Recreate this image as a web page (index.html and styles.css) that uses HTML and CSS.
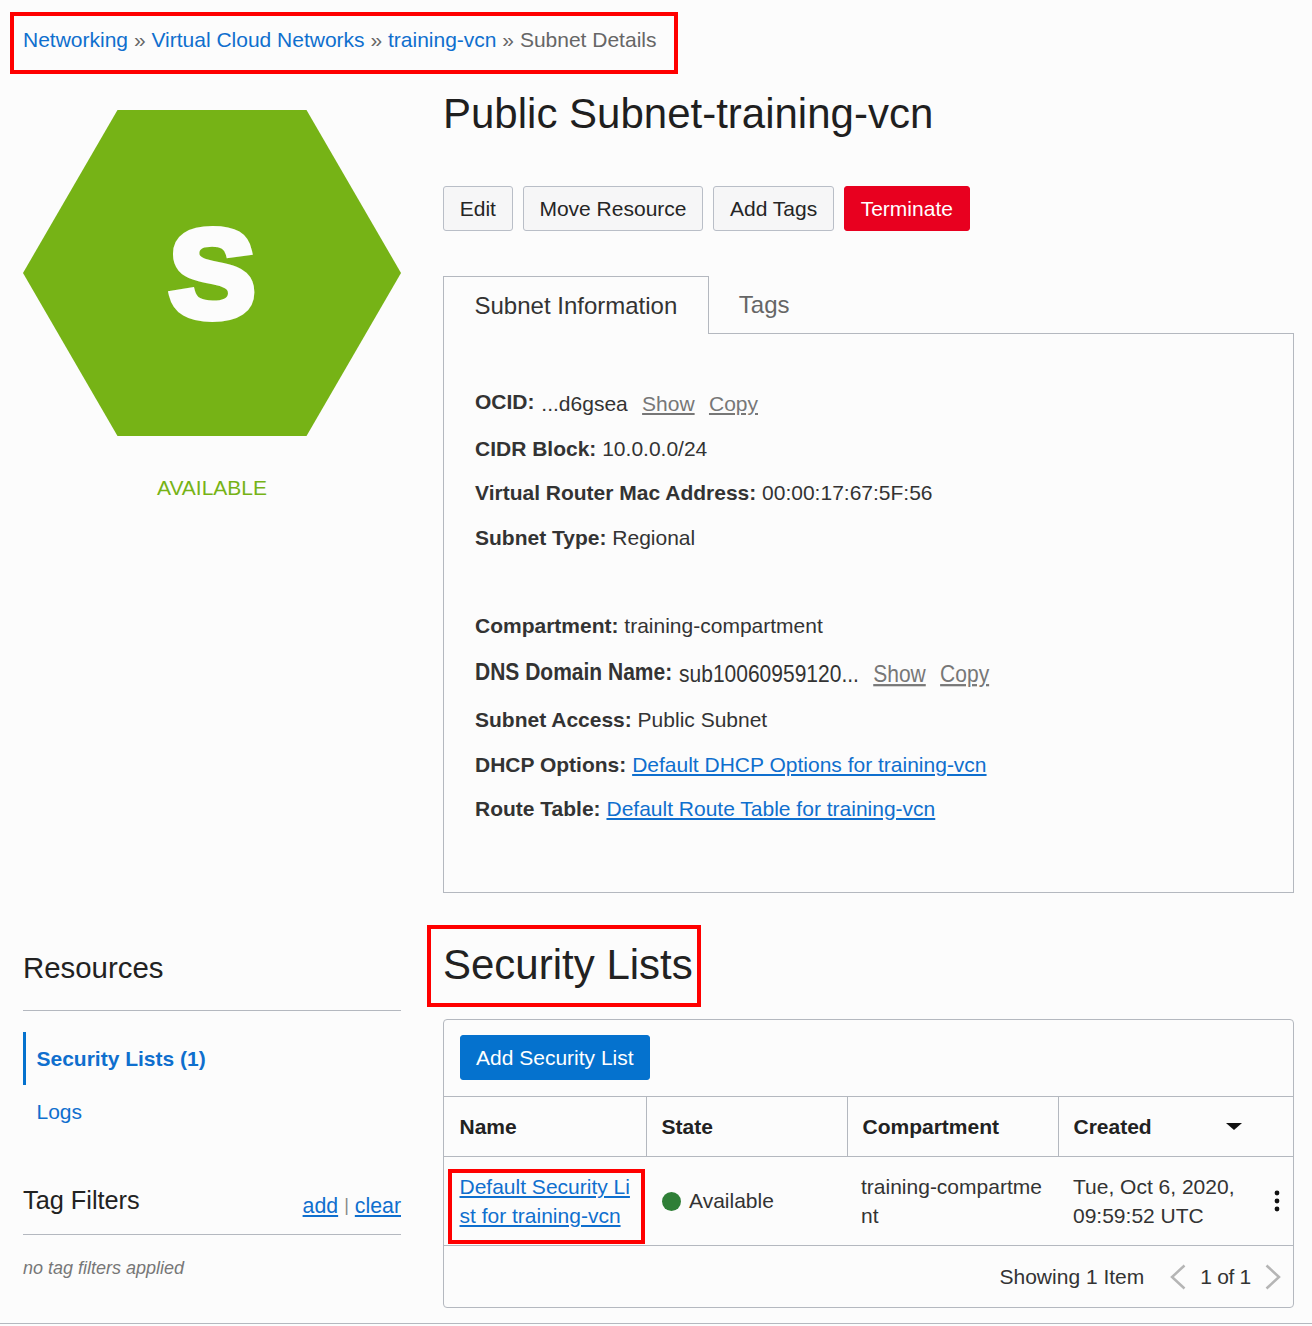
FILE: index.html
```html
<!DOCTYPE html>
<html lang="en">
<head>
    <meta charset="UTF-8">
    <title>Subnet Details</title>
    <link rel="stylesheet" href="styles.css">
</head>
<body>
    <nav class="crumbs">
        <a href="#">Networking</a> » <a href="#">Virtual Cloud Networks</a> » <a href="#">training-vcn</a> » Subnet Details
    </nav>

    <div class="layout">
        <div class="side">
            <div class="hex"><span class="hex-letter">S</span></div>
            <div class="status">AVAILABLE</div>
        </div>
        <div class="main">
            <h1 class="title">Public Subnet-training-vcn</h1>
            <div class="actions">
                <button class="btn">Edit</button>
                <button class="btn">Move Resource</button>
                <button class="btn">Add Tags</button>
                <button class="btn btn-danger">Terminate</button>
            </div>
            <div class="tabs">
                <div class="tab tab-active">Subnet Information</div>
                <div class="tab">Tags</div>
            </div>
            <div class="panel">
                <div class="info info-tall"><b>OCID:</b> <span class="val">...d6gsea</span> <a class="muted" href="#">Show</a> <a class="muted" href="#">Copy</a></div>
                <div class="info"><b>CIDR Block:</b> 10.0.0.0/24</div>
                <div class="info"><b>Virtual Router Mac Address:</b> 00:00:17:67:5F:56</div>
                <div class="info info-gap"><b>Subnet Type:</b> Regional</div>
                <div class="info"><b>Compartment:</b> training-compartment</div>
                <div class="info info-tall info-dns"><b>DNS Domain Name:</b> <span class="val">sub10060959120...</span> <a class="muted" href="#">Show</a> <a class="muted" href="#">Copy</a></div>
                <div class="info"><b>Subnet Access:</b> Public Subnet</div>
                <div class="info"><b>DHCP Options:</b> <a href="#">Default DHCP Options for training-vcn</a></div>
                <div class="info"><b>Route Table:</b> <a href="#">Default Route Table for training-vcn</a></div>
            </div>
        </div>

        <aside class="side side-lower">
            <h2 class="side-title">Resources</h2>
            <ul class="side-menu">
                <li class="current"><a href="#">Security Lists (1)</a></li>
                <li><a href="#">Logs</a></li>
            </ul>
            <div class="filter-head">
                <h3>Tag Filters</h3>
                <div class="filter-links"><a href="#">add</a><span class="pipe">|</span><a href="#">clear</a></div>
            </div>
            <p class="no-filters">no tag filters applied</p>
        </aside>
        <section class="main">
            <h2 class="list-title">Security Lists</h2>
            <div class="card">
                <div class="card-top"><button class="btn btn-primary">Add Security List</button></div>
                <table class="grid">
                    <thead>
                        <tr>
                            <th class="col-name">Name</th>
                            <th class="col-state">State</th>
                            <th class="col-comp">Compartment</th>
                            <th class="col-created">Created<span class="sort"></span></th>
                        </tr>
                    </thead>
                    <tbody>
                        <tr>
                            <td class="name-cell"><a class="breaky" href="#">Default Security List for training-vcn</a><span class="mark"></span></td>
                            <td class="state-cell"><span class="dot"></span>Available</td>
                            <td class="breaky comp-cell">training-compartment</td>
                            <td class="created-cell">Tue, Oct 6, 2020, 09:59:52 UTC
                                <svg class="kebab" width="6" height="22" viewBox="0 0 6 22"><circle cx="3" cy="3" r="2.4"/><circle cx="3" cy="11" r="2.4"/><circle cx="3" cy="19" r="2.4"/></svg>
                            </td>
                        </tr>
                    </tbody>
                </table>
                <div class="card-foot">
                    <span class="showing">Showing 1 Item</span>
                    <svg class="pager" width="16" height="26" viewBox="0 0 16 26"><path d="M14.5 1.5 2 13l12.5 11.5"/></svg>
                    <span class="pages">1 of 1</span>
                    <svg class="pager" width="16" height="26" viewBox="0 0 16 26"><path d="M1.5 1.5 14 13 1.5 24.5"/></svg>
                </div>
            </div>
        </section>
    </div>
    <div class="page-end"></div>
</body>
</html>
```
FILE: styles.css
```css
* {
    box-sizing: border-box;
}
body {
    margin: 0;
    height: 1326px;
    overflow: hidden;
    background: #fcfcfc;
    color: #333;
    font-family: "Liberation Sans", Arial, sans-serif;
    font-size: 21px;
}
a {
    color: #0f6fce;
}
.crumbs {
    width: 668px;
    height: 62px;
    margin: 12px 0 0 10px;
    padding: 11px 0 0 9px;
    border: 4px solid #f00;
    color: #666;
    line-height: 25px;
}
.crumbs a {
    text-decoration: none;
}
.layout {
    display: grid;
    grid-template-columns: 378px 851px;
    column-gap: 42px;
    margin-left: 23px;
}
.hex {
    display: flex;
    justify-content: center;
    align-items: center;
    height: 326px;
    margin-top: 36px;
    padding-top: 2px;
    background: #76b316;
    clip-path: polygon(25% 0, 75% 0, 100% 50%, 75% 100%, 25% 100%, 0 50%);
}
.hex-letter {
    color: #fcfcfc;
    font-size: 124px;
    font-weight: bold;
    -webkit-text-stroke: 8px #fcfcfc;
    transform: scaleX(1.04);
}
.status {
    margin-top: 40px;
    color: #76b316;
    text-align: center;
    line-height: 23px;
}
.title {
    margin: 15px 0 0;
    color: #1f1f1f;
    font-size: 42px;
    font-weight: normal;
    line-height: 50px;
}
.actions {
    display: flex;
    gap: 10px;
    margin-top: 47px;
}
.btn {
    height: 45px;
    padding: 0 15.75px;
    border: 1px solid #b9bec7;
    border-radius: 3px;
    background: #f6f6f7;
    color: #252525;
    font-family: inherit;
    font-size: 21px;
}
.btn-danger {
    border-color: #e8001f;
    background: #e8001f;
    color: #fff;
}
.btn-primary {
    padding: 0 15px;
    border-color: #0572ce;
    background: #0572ce;
    color: #fff;
}
.tabs {
    display: flex;
    margin-top: 45px;
}
.tab {
    height: 58px;
    padding: 0 30px;
    color: #666;
    font-size: 24px;
    line-height: 58px;
}
.tab-active {
    position: relative;
    z-index: 1;
    padding: 0 30.5px;
    border: 1px solid #b4b8bf;
    border-bottom: 0;
    background: #fcfcfc;
    color: #333;
    line-height: 58px;
}
.panel {
    height: 560px;
    margin-top: -1px;
    padding: 55px 31px 0;
    border: 1px solid #b4b8bf;
}
.info {
    height: 44.3px;
    line-height: 26px;
}
.info-tall {
    height: 47px;
}
.info-tall b {
    vertical-align: 2px;
}
.info-gap {
    margin-bottom: 44.3px;
}
.info .muted {
    margin-left: 8.5px;
    color: #777;
}
.info .val {
    margin-left: 1px;
}
.info-dns {
    transform-origin: 0 50%;
    transform: scaleY(1.12);
    margin-top: 3px;
}
.side-lower {
    margin-top: 32px;
}
.side-title {
    margin: 26px 0 0;
    padding-bottom: 25px;
    border-bottom: 1px solid #b4b8bf;
    color: #222;
    font-size: 29.4px;
    font-weight: normal;
    line-height: 34px;
}
.side-menu {
    margin: 21px 0 0;
    padding: 0;
    list-style: none;
}
.side-menu li {
    height: 53px;
    padding-left: 13.5px;
    line-height: 53px;
}
.side-menu a {
    text-decoration: none;
}
.side-menu .current {
    padding-left: 10.5px;
    border-left: 3px solid #0572ce;
    font-weight: bold;
}
.filter-head {
    display: flex;
    justify-content: space-between;
    align-items: flex-end;
    margin-top: 47px;
    padding-bottom: 19px;
    border-bottom: 1px solid #b4b8bf;
}
.filter-head h3 {
    margin: 0;
    color: #222;
    font-size: 25.3px;
    font-weight: normal;
    line-height: 30px;
}
.filter-links {
    margin-bottom: -4px;
    font-size: 21.3px;
}
.pipe {
    margin: 0 6px;
    color: #888;
    font-size: 18px;
    vertical-align: 2px;
}
.no-filters {
    margin: 23px 0 0;
    color: #777;
    font-size: 18px;
    font-style: italic;
}
.list-title {
    width: 274px;
    height: 82px;
    margin: 32px 0 12px -16px;
    padding-left: 12px;
    border: 4px solid #f00;
    color: #222;
    font-size: 42px;
    font-weight: normal;
    line-height: 72px;
    white-space: nowrap;
}
.card {
    height: 289px;
    border: 1px solid #b4b8bf;
    border-radius: 4px;
}
.card-top {
    height: 76px;
    padding: 15px 16px;
}
.grid {
    width: 100%;
    border-collapse: collapse;
    table-layout: fixed;
}
.grid th {
    height: 60px;
    padding: 0 15px;
    border: 1px solid #b4b8bf;
    border-left: 0;
    color: #222;
    text-align: left;
}
.grid th:first-child {
    padding-left: 15.5px;
}
.grid th:last-child {
    border-right: 0;
}
.col-name {
    width: 202px;
}
.col-state {
    width: 201px;
}
.col-comp {
    width: 211px;
}
.sort {
    display: inline-block;
    margin-left: 74px;
    vertical-align: 4px;
    border-top: 7px solid #111;
    border-left: 8px solid transparent;
    border-right: 8px solid transparent;
}
.grid td {
    height: 89px;
    padding: 0 15px;
    border-bottom: 1px solid #b4b8bf;
    line-height: 29px;
}
.grid .name-cell {
    position: relative;
    padding-left: 15.5px;
}
.grid .state-cell {
    padding-left: 16px;
    padding-bottom: 2px;
}
.grid .comp-cell {
    padding-left: 14px;
}
.breaky {
    word-break: break-all;
}
.mark {
    position: absolute;
    left: 4px;
    top: 12px;
    width: 197px;
    height: 75px;
    border: 4px solid #f00;
}
.dot {
    display: inline-block;
    width: 19px;
    height: 19px;
    margin-right: 8px;
    border-radius: 50%;
    background: #2f7f37;
    vertical-align: -3px;
}
.grid .created-cell {
    position: relative;
    padding-right: 50px;
}
.kebab {
    position: absolute;
    right: 13px;
    top: 33px;
    fill: #111;
}
.card-foot {
    display: flex;
    justify-content: flex-end;
    align-items: center;
    height: 62px;
    padding-right: 12px;
}
.pager {
    fill: none;
    stroke: #b5b5b5;
    stroke-width: 2.5;
}
.showing {
    margin-right: 26px;
}
.pages {
    margin: 0 14px;
    letter-spacing: -0.3px;
}
.page-end {
    position: absolute;
    left: 0;
    right: 0;
    top: 1323px;
    height: 1px;
    background: #b4b8bf;
}
```
